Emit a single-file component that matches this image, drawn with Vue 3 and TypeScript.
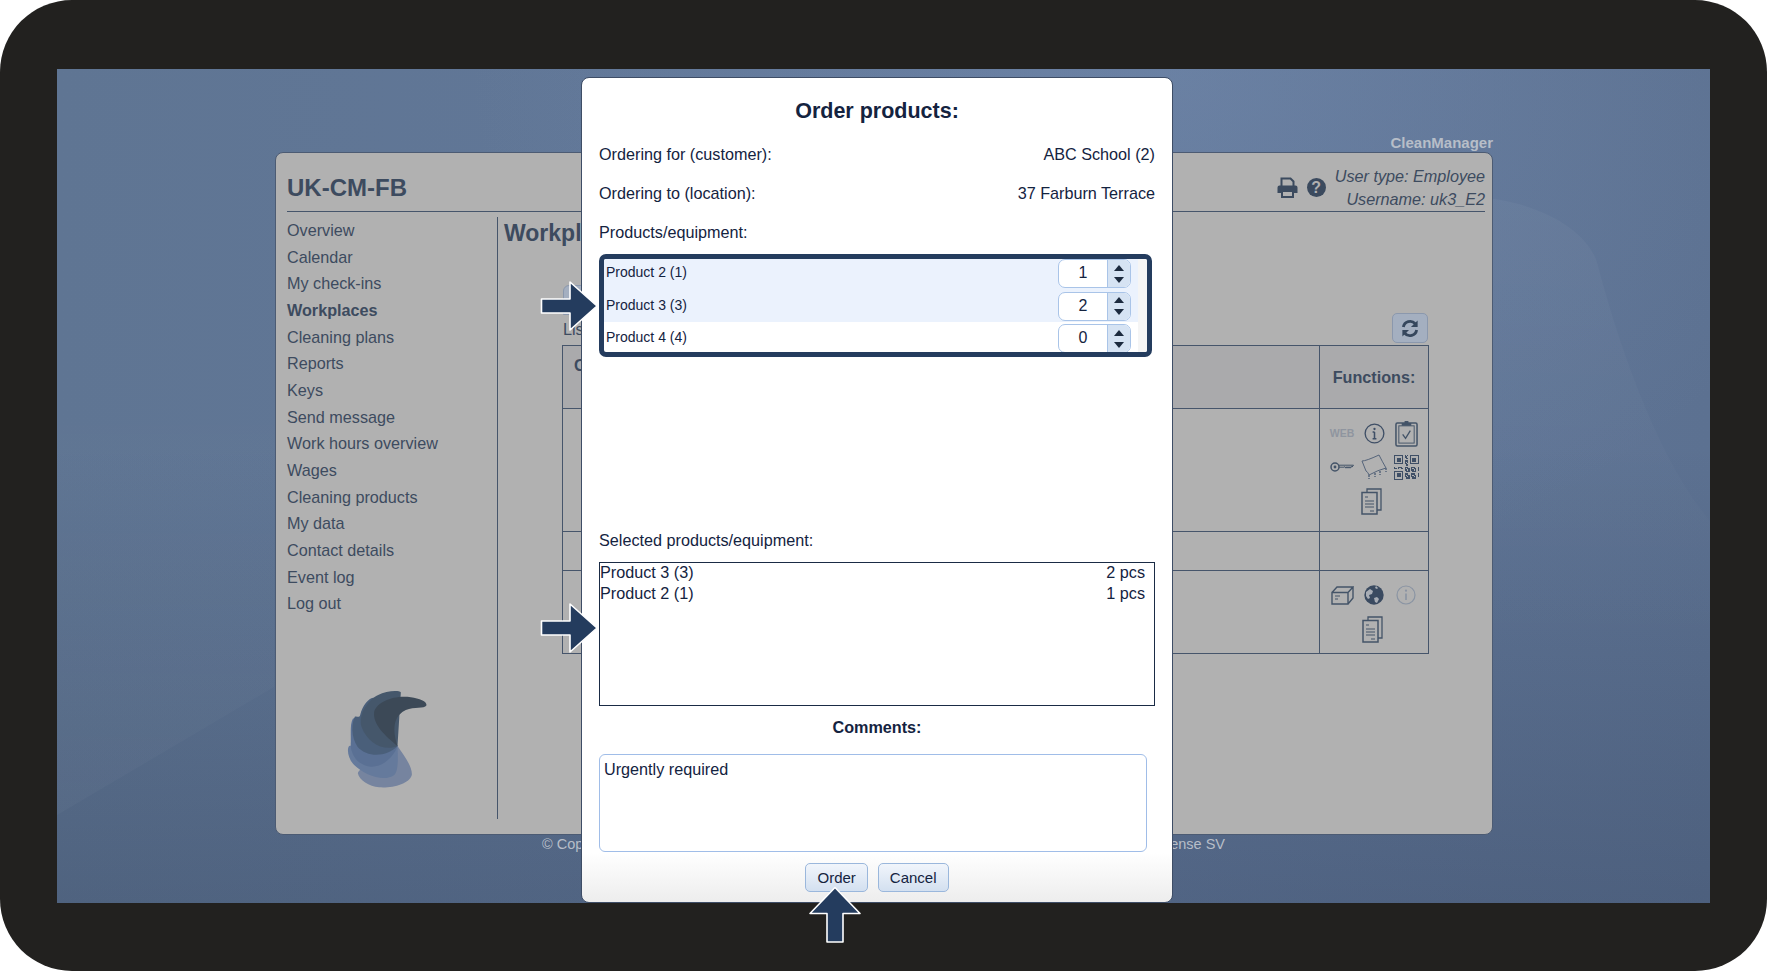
<script setup lang="ts">
interface Product {
  name: string
  qty: number
  active: boolean
}

const navItems = [
  'Overview', 'Calendar', 'My check-ins', 'Workplaces', 'Cleaning plans', 'Reports', 'Keys', 'Send message',
  'Work hours overview', 'Wages', 'Cleaning products', 'My data', 'Contact details', 'Event log', 'Log out',
]

const products: Product[] = [
  { name: 'Product 2 (1)', qty: 1, active: true },
  { name: 'Product 3 (3)', qty: 2, active: true },
  { name: 'Product 4 (4)', qty: 0, active: false },
]

const selected = [
  { name: 'Product 3 (3)', qty: '2 pcs' },
  { name: 'Product 2 (1)', qty: '1 pcs' },
]

// rough qr pattern, everything outside the three corner squares
const qrCells: number[][] = []
for (let y = 0; y < 19; y++) {
  for (let x = 0; x < 19; x++) {
    const inFinder = (x < 8 && y < 8) || (x > 10 && y < 8) || (x < 8 && y > 10)
    if (!inFinder && (x * 7 + y * 13 + x * y) % 5 < 3) qrCells.push([x, y])
  }
}
</script>

<template>
  <div class="frame">
    <div class="screen">
      <svg class="wallpaper" viewBox="0 0 1653 834" width="1653" height="834">
        <defs>
          <linearGradient id="sweep" x1="0" y1="0" x2="0" y2="1">
            <stop offset="0" stop-color="#fff" stop-opacity="0.035" />
            <stop offset="1" stop-color="#fff" stop-opacity="0" />
          </linearGradient>
          <linearGradient id="wedge" x1="0" y1="0" x2="0" y2="1">
            <stop offset="0" stop-color="#fff" stop-opacity="0" />
            <stop offset="1" stop-color="#fff" stop-opacity="0.025" />
          </linearGradient>
        </defs>
        <path d="M1438 130C1500 140 1535 170 1541 197C1560 270 1600 390 1653 452V600H1300V130Z" fill="url(#sweep)" />
        <path d="M0 746L217 618V300H0Z" fill="url(#wedge)" />
      </svg>

      <div class="brand">CleanManager</div>
      <section class="panel">
        <header class="panel-head">
          <h1>UK-CM-FB</h1>
          <div class="head-tools">
            <svg class="printer" viewBox="0 0 21 21">
              <path d="M4.5 9V1.5h9l3 3V9" fill="none" stroke="#3b4a5e" stroke-width="2" />
              <path d="M2.5 8.5h16a2 2 0 0 1 2 2V16h-3.5v-3H4v3H.5v-5.5a2 2 0 0 1 2-2z" fill="#3b4a5e" />
              <path d="M5 14h11v6H5z" fill="none" stroke="#3b4a5e" stroke-width="2" />
            </svg>
            <span class="help">?</span>
            <div class="user">
              <div>User type: Employee</div>
              <div>Username: uk3_E2</div>
            </div>
          </div>
        </header>

        <div class="panel-body">
          <nav class="side">
            <a v-for="item in navItems" :key="item" :class="{ current: item === 'Workplaces' }">{{ item }}</a>
            <svg class="logo" viewBox="130 90 260 300">
              <path d="M290 258C312 290 335 320 333 345C325 372 275 385 235 382C205 380 175 360 171 340C170 335 200 300 290 258Z" fill="#76849f" />
              <path d="M290 258C292 300 292 335 280 345C250 368 190 345 160 315C140 295 138 265 145 258C155 255 200 250 290 258Z" fill="#657a9c" />
              <path d="M290 258C280 290 245 322 210 320C175 318 146 285 150 245C150 215 148 190 156 176C165 170 175 175 178 170Z" fill="#5a7094" />
              <path d="M290 258C260 290 200 295 170 260C150 230 152 190 162 170C170 168 175 175 178 165C185 135 205 112 220 113L228 130Z" fill="#4a5f7a" />
              <path d="M290 258C250 275 200 250 182 200C172 165 200 120 232 105C255 92 295 90 300 97Z" fill="#45576b" />
              <path d="M290 258C255 228 215 195 220 155C230 125 280 105 330 112C355 115 379 125 377 136C370 148 340 140 315 150C285 165 270 195 290 258Z" fill="#3c4957" />
            </svg>
          </nav>

          <main class="content">
            <h2>Workplaces</h2>
            <div class="tab"></div>
            <div class="list-row">
              <span>List of workplaces</span>
              <button type="button" class="refresh">
                <svg viewBox="0 0 20 20" width="20" height="19">
                  <path d="M3 8.5A7.2 7.2 0 0 1 15.5 5" fill="none" stroke="#36475d" stroke-width="3" />
                  <path d="M18 1.5v7h-7z" fill="#36475d" />
                  <path d="M17 11.5A7.2 7.2 0 0 1 4.5 15" fill="none" stroke="#36475d" stroke-width="3" />
                  <path d="M2 18.5v-7h7z" fill="#36475d" />
                </svg>
              </button>
            </div>

            <div class="table">
              <div class="cell head">Customer</div>
              <div class="cell head fn-head">Functions:</div>

              <div class="cell row-a"></div>
              <div class="cell fn row-a">
                <span class="ico"><span class="web">WEB</span></span>
                <span class="ico">
                  <svg viewBox="0 0 22 22" width="21" height="21">
                    <circle cx="11" cy="11" r="9.8" fill="none" stroke="#3f4f66" stroke-width="1.4" />
                    <path d="M11 9.5v7M9 9.5h2M9 16.5h4" fill="none" stroke="#3f4f66" stroke-width="1.6" />
                    <circle cx="11" cy="6.3" r="1.2" fill="#3f4f66" />
                  </svg>
                </span>
                <span class="ico">
                  <svg viewBox="0 0 24 28" width="23" height="27">
                    <rect x="1" y="3" width="22" height="24" rx="1.5" fill="none" stroke="#445468" stroke-width="1.6" />
                    <rect x="4" y="6" width="16" height="18" fill="none" stroke="#445468" stroke-width="1" />
                    <path d="M7 3h10v3H7zM10 1h4v2h-4z" fill="#445468" />
                    <path d="M8 15l3 4 5-8" fill="none" stroke="#445468" stroke-width="1.4" />
                  </svg>
                </span>
                <span class="ico">
                  <svg viewBox="0 0 24 12" width="24" height="12">
                    <circle cx="5" cy="6" r="4" fill="none" stroke="#445468" stroke-width="1.5" />
                    <circle cx="5" cy="6" r="1.4" fill="#445468" />
                    <path d="M9 4.2h14.5l-1.5 2-1-.8-1 1.8-1-1.6-1 1.6-1-1.6-1 1.6-1-1.6-1 .6H9" fill="none" stroke="#445468" stroke-width="1" />
                  </svg>
                </span>
                <span class="ico">
                  <svg viewBox="0 0 26 26" width="26" height="26">
                    <path d="M1 7Q5 7 18 1Q21 7 25 14Q17 16 8 21Q7 18 5 17Q3 12 1 7z" fill="none" stroke="#55647a" stroke-width="1" />
                    <path d="M8 21v4M14 19v4M19 17v4M25 14v4" stroke="#55647a" stroke-width="1.5" stroke-dasharray="2 1" />
                  </svg>
                </span>
                <span class="ico">
                  <svg viewBox="0 0 19 19" width="25" height="27" shape-rendering="crispEdges">
                    <g fill="none" stroke="#3f4f66">
                      <rect x="0.5" y="0.5" width="6" height="6" />
                      <rect x="12.5" y="0.5" width="6" height="6" />
                      <rect x="0.5" y="12.5" width="6" height="6" />
                    </g>
                    <g fill="#3f4f66">
                      <rect x="2" y="2" width="3" height="3" />
                      <rect x="14" y="2" width="3" height="3" />
                      <rect x="2" y="14" width="3" height="3" />
                      <rect v-for="c in qrCells" :key="c.join()" :x="c[0]" :y="c[1]" width="1" height="1" />
                    </g>
                  </svg>
                </span>
                <span class="ico docs-a">
                  <svg viewBox="0 0 21 27" width="21" height="27">
                    <path d="M6 4V1h14v21h-4" fill="none" stroke="#445468" stroke-width="1.3" />
                    <rect x="1" y="4.5" width="15" height="21.5" fill="none" stroke="#445468" stroke-width="1.5" />
                    <path d="M4 9h3M4 13h9M4 16h9M4 19h9M9 23h4" stroke="#445468" stroke-width="1.2" />
                  </svg>
                </span>
              </div>

              <div class="cell row-b"></div>
              <div class="cell row-b"></div>

              <div class="cell row-c"></div>
              <div class="cell fn row-c">
                <span class="ico">
                  <svg viewBox="0 0 23 19" width="23" height="19">
                    <path d="M1 6.5h16V18H1zM1 6.5L6 1h16l-5 5.5M22 1v11l-5 6" fill="none" stroke="#445468" stroke-width="1.4" />
                    <path d="M4 10h5M4 13h3" stroke="#445468" stroke-width="1.2" />
                  </svg>
                </span>
                <span class="ico">
                  <svg viewBox="0 0 20 20" width="20" height="20">
                    <circle cx="10" cy="10" r="9.7" fill="#3a4a60" />
                    <path d="M2 7l4-3 3 2-1 3-3 1 1 3-2 1-2-3zM10 13l3-1 2 2-2 4-2-1zM12 1l2 2-1 1-2-1z" fill="#a8adb5" />
                  </svg>
                </span>
                <span class="ico">
                  <svg viewBox="0 0 20 20" width="20" height="20">
                    <circle cx="10" cy="10" r="9" fill="none" stroke="#8a94a3" stroke-width="1.2" />
                    <path d="M10 8.5v6.5" stroke="#8a94a3" stroke-width="1.6" />
                    <circle cx="10" cy="5.7" r="1.1" fill="#8a94a3" />
                  </svg>
                </span>
                <span class="ico docs-b">
                  <svg viewBox="0 0 21 27" width="21" height="27">
                    <path d="M6 4V1h14v21h-4" fill="none" stroke="#445468" stroke-width="1.3" />
                    <rect x="1" y="4.5" width="15" height="21.5" fill="none" stroke="#445468" stroke-width="1.5" />
                    <path d="M4 9h3M4 13h9M4 16h9M4 19h9M9 23h4" stroke="#445468" stroke-width="1.2" />
                  </svg>
                </span>
              </div>
            </div>
          </main>
        </div>
      </section>

      <footer class="foot">
        <span>© Copyright CleanManager</span>
        <span>License SV</span>
      </footer>

      <div class="modal">
        <h3>Order products:</h3>
        <div class="info-row"><span>Ordering for (customer):</span><span>ABC School (2)</span></div>
        <div class="info-row"><span>Ordering to (location):</span><span>37 Farburn Terrace</span></div>
        <div class="info-row"><span>Products/equipment:</span></div>

        <div class="picker">
          <div class="picker-list">
            <div v-for="p in products" :key="p.name" class="picker-row" :class="{ active: p.active }">
              <span>{{ p.name }}</span>
              <div class="qty">
                <span class="qty-val">{{ p.qty }}</span>
                <span class="qty-spin">
                  <i class="up"></i>
                  <i class="down"></i>
                </span>
              </div>
            </div>
          </div>
          <div class="scroll-track"></div>
        </div>

        <div class="selected-label">Selected products/equipment:</div>
        <div class="selected">
          <div v-for="s in selected" :key="s.name" class="selected-row">
            <span>{{ s.name }}</span><span>{{ s.qty }}</span>
          </div>
        </div>

        <div class="comments-label">Comments:</div>
        <textarea class="comments" readonly>Urgently required</textarea>

        <div class="actions">
          <button type="button" class="btn">Order</button>
          <button type="button" class="btn">Cancel</button>
        </div>
      </div>
    </div>

    <svg class="arrow arrow-top" viewBox="0 0 60 52" width="60" height="52">
      <path d="M1.5 19H30V2l27 24-27 24V33H1.5z" fill="#243c5e" stroke="#fff" stroke-width="1.6" stroke-linejoin="round" />
    </svg>
    <svg class="arrow arrow-mid" viewBox="0 0 60 52" width="60" height="52">
      <path d="M1.5 19H30V2l27 24-27 24V33H1.5z" fill="#243c5e" stroke="#fff" stroke-width="1.6" stroke-linejoin="round" />
    </svg>
    <svg class="arrow arrow-up" viewBox="0 0 54 58" width="54" height="58">
      <path d="M27 1.5l25 26H35V56H19V27.5H2z" fill="#243c5e" stroke="#fff" stroke-width="1.6" stroke-linejoin="round" />
    </svg>
  </div>
</template>

<style>
html,
body {
  background: #fff;
  margin: 0;
  overflow: hidden;
}
</style>

<style scoped>
.frame {
  background: #22211f;
  border-radius: 72px;
  box-sizing: border-box;
  font-family: "Liberation Sans", Arial, sans-serif;
  height: 971px;
  padding: 69px 57px 68px;
  position: relative;
  width: 1767px;
}

.screen {
  background:
    radial-gradient(ellipse 700px 520px at 1110px 0, rgba(128, 152, 188, 0.3), transparent 100%),
    linear-gradient(180deg, rgba(0, 0, 0, 0) 45%, rgba(16, 26, 48, 0.2) 100%),
    linear-gradient(90deg, #5f7593 0%, #62789a 60%, #5c7191 100%);
  height: 834px;
  isolation: isolate;
  position: relative;
  width: 1653px;
}

.wallpaper {
  left: 0;
  position: absolute;
  top: 0;
  z-index: -1;
}

.brand {
  box-sizing: border-box;
  color: #b7bec8;
  font-size: 15px;
  font-weight: 700;
  height: 83px;
  line-height: 28px;
  padding-top: 60px;
  text-align: right;
  width: 1436px;
}

.panel {
  background: #b1b1b1;
  border: 1px solid #4c5b73;
  border-radius: 8px;
  box-sizing: border-box;
  color: #3d4b5f;
  height: 683px;
  margin-left: 218px;
  padding: 0 7px 0 11px;
  width: 1218px;
}

.panel-head {
  align-items: flex-end;
  border-bottom: 1px solid #46556b;
  box-sizing: border-box;
  display: flex;
  height: 59px;
  justify-content: space-between;
}

.panel-head h1 {
  font-size: 24px;
  line-height: 28px;
  margin: 0 0 9px;
}

.head-tools {
  align-items: center;
  display: flex;
}

.printer {
  height: 21px;
  margin: 0 9px 2px 0;
  width: 21px;
}

.help {
  background: #3b4a5e;
  border-radius: 50%;
  color: #b1b1b1;
  font-size: 16px;
  font-weight: 700;
  height: 19px;
  line-height: 19px;
  margin: 0 9px 2px 0;
  text-align: center;
  width: 19px;
}

.user {
  font-size: 16.2px;
  font-style: italic;
  line-height: 23px;
  text-align: right;
}

.panel-body {
  display: flex;
}

.side {
  border-right: 1px solid #46556b;
  box-sizing: border-box;
  display: flex;
  flex-direction: column;
  height: 602px;
  margin-top: 5px;
  width: 211px;
}

.side a {
  font-size: 16.2px;
  height: 26.67px;
  line-height: 26.67px;
}

.side a.current {
  font-weight: 700;
}

.logo {
  height: 100px;
  margin: 73px 0 0 57px;
  width: 87px;
}

.content {
  box-sizing: border-box;
  flex: 1;
  padding-left: 6px;
}

.content h2 {
  font-size: 23px;
  line-height: 28px;
  margin: 7px 0 0;
  white-space: nowrap;
}

.tab {
  background: #a4afc0;
  border: 1px solid #8b98ad;
  border-radius: 6px 0 0 0;
  box-sizing: border-box;
  height: 30px;
  margin: 38px 0 0 59px;
  width: 80px;
}

.list-row {
  align-items: flex-end;
  display: flex;
  font-size: 16.2px;
  height: 30px;
  justify-content: space-between;
  padding-left: 59px;
  width: 865px;
}

.list-row span {
  line-height: 24px;
  margin-bottom: 4px;
  white-space: nowrap;
}

.refresh {
  align-items: center;
  background: #a4afc0;
  border: 1px solid #8b98ad;
  border-radius: 5px;
  display: flex;
  height: 30px;
  justify-content: center;
  margin-bottom: 2px;
  padding: 0;
  width: 36px;
}

.table {
  border-left: 1px solid #46556b;
  border-top: 1px solid #46556b;
  box-sizing: border-box;
  display: grid;
  grid-template-columns: 757px 109px;
  grid-template-rows: 63px 123px 39px 83px;
  margin-left: 58px;
  width: 867px;
}

.cell {
  border-bottom: 1px solid #46556b;
  border-right: 1px solid #46556b;
  box-sizing: border-box;
}

.cell.head {
  background: #aaaaac;
  font-size: 16.2px;
  font-weight: 700;
  padding: 10px 11px;
}

.cell.fn-head {
  align-items: center;
  display: flex;
  justify-content: center;
  padding: 0;
}

.fn {
  align-content: flex-start;
  display: flex;
  flex-wrap: wrap;
  justify-content: center;
  padding-top: 7px;
}

.row-c.fn {
  padding-top: 7px;
}

.ico {
  align-items: center;
  display: flex;
  height: 34px;
  justify-content: center;
  width: 32px;
}

.docs-a {
  margin-right: 6px;
}

.docs-b {
  margin-right: 3px;
}

.web {
  color: #8f959f;
  font-size: 10.5px;
  font-weight: 700;
}

.foot {
  color: #b7bec8;
  display: flex;
  font-size: 14.5px;
  justify-content: space-between;
  margin: 0 0 0 485px;
  padding-top: 1px;
  width: 683px;
}

.modal {
  background: linear-gradient(180deg, #fff 0%, #fff 94%, #ededed 100%);
  border: 1px solid #3e4d66;
  border-radius: 8px;
  box-sizing: border-box;
  color: #14233f;
  display: flex;
  flex-direction: column;
  font-size: 16.2px;
  height: 826px;
  left: 524px;
  padding: 0 17px;
  position: absolute;
  top: 8px;
  width: 592px;
}

.modal h3 {
  font-size: 21.5px;
  line-height: 26px;
  margin: 20px 0 11px;
  text-align: center;
}

.info-row {
  display: flex;
  height: 39px;
  justify-content: space-between;
  line-height: 39px;
}

.info-row:nth-of-type(4) {
  height: 30px;
}

.picker {
  background: #fff;
  border: 5px solid #243c5e;
  border-radius: 7px;
  box-sizing: border-box;
  display: flex;
  height: 103px;
  margin-top: 2px;
  overflow: hidden;
  width: 553px;
}

.picker-list {
  flex: 1;
}

.picker-row {
  align-items: flex-start;
  box-sizing: border-box;
  display: flex;
  flex-shrink: 0;
  font-size: 14px;
  height: 32.5px;
  justify-content: space-between;
  line-height: 27px;
  padding: 0 7px 0 2px;
}

.picker-row.active + .picker-row.active {
  height: 30px;
  margin-bottom: 2.5px;
}

.picker-row.active {
  background: #ebf2fd;
}

.qty {
  background: #fff;
  border: 1px solid #a9c4e8;
  border-radius: 7px;
  box-sizing: border-box;
  display: flex;
  font-size: 16px;
  height: 29px;
  overflow: hidden;
  width: 73px;
}

.qty-val {
  flex: 1;
  line-height: 25px;
  text-align: center;
}

.qty-spin {
  align-items: center;
  background: #d6e3f3;
  border-left: 1px solid #a9c4e8;
  display: flex;
  flex-direction: column;
  gap: 6px;
  justify-content: center;
  width: 22px;
}

.qty-spin i {
  border-left: 5.5px solid transparent;
  border-right: 5.5px solid transparent;
  height: 0;
  width: 0;
}

.qty-spin .up {
  border-bottom: 6px solid #1c2a3e;
}

.qty-spin .down {
  border-top: 6px solid #1c2a3e;
}

.scroll-track {
  background: #f5f5f5;
  width: 9px;
}

.selected-label {
  line-height: 20px;
  margin-top: 173px;
}

.selected {
  border: 1px solid #1a2b45;
  box-sizing: border-box;
  height: 144px;
  margin-top: 12px;
  padding: 0 9px 0 0;
}

.selected-row {
  display: flex;
  justify-content: space-between;
  line-height: 21px;
}

.selected-row:first-child {
  margin-top: -1px;
}

.comments-label {
  font-weight: 700;
  line-height: 20px;
  margin-top: 11px;
  text-align: center;
}

.comments {
  border: 1px solid #a0bde8;
  border-radius: 6px;
  box-sizing: border-box;
  color: #14233f;
  display: block;
  font-family: inherit;
  font-size: 16.2px;
  height: 98px;
  line-height: 20px;
  margin-top: 17px;
  outline: none;
  padding: 4px 4px;
  resize: none;
  width: 548px;
}

.actions {
  display: flex;
  gap: 10px;
  justify-content: center;
  margin-top: 11px;
}

.btn {
  background: linear-gradient(180deg, #f1f5fb 0%, #d3e0f0 100%);
  border: 1px solid #9ab7dc;
  border-radius: 5px;
  color: #14233f;
  font-family: inherit;
  font-size: 15px;
  height: 29px;
  padding: 0 11px;
}

.arrow {
  position: absolute;
}

.arrow-top {
  left: 540px;
  top: 280px;
}

.arrow-mid {
  left: 540px;
  top: 602px;
}

.arrow-up {
  left: 808px;
  top: 886px;
}
</style>
